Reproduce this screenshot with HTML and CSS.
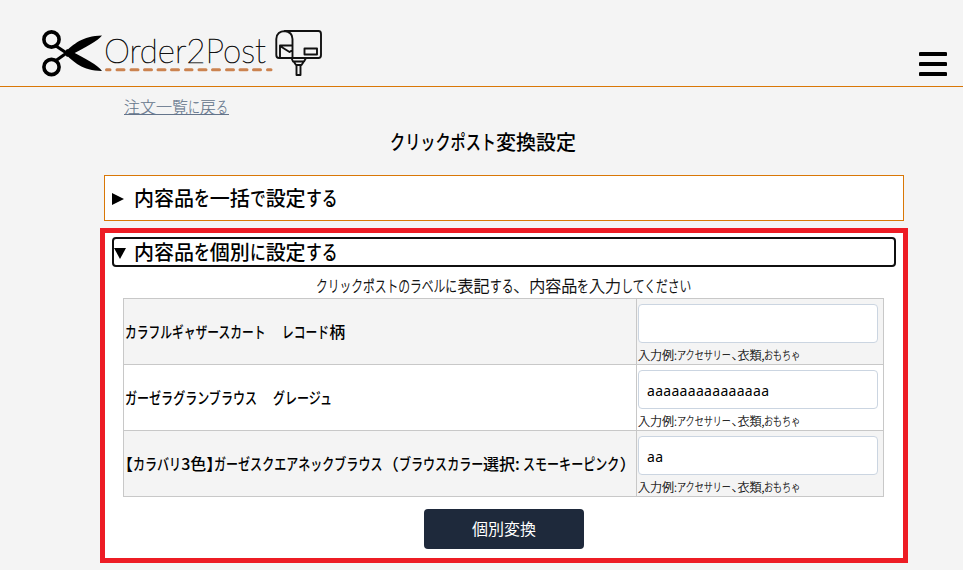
FILE: index.html
```html
<!DOCTYPE html>
<html lang="ja">
<head>
<meta charset="utf-8">
<title>Order2Post</title>
<link rel="stylesheet" href="styles.css">
</head>
<body>
<header class="header">
  <svg class="logo" viewBox="40 26 286 54" width="286" height="54">
    <g fill="none" stroke="#000" stroke-width="3.6">
      <circle cx="51.5" cy="39.5" r="7.6"/>
      <circle cx="51.5" cy="67" r="7.6"/>
      <path d="M56 46L68 54M56 60.500L68 52" stroke-width="3.200"/>
    </g>
    <path d="M64 53C74 44 82 36 102 35.500C98 41 86 47 67 57Z"/>
    <path d="M64 53C74 62 82 70.500 102 71C98 65 86 59 67 49Z"/>
    <text class="logo-text" x="104" y="63" textLength="162" lengthAdjust="spacingAndGlyphs">Order2Post</text>
    <path d="M106.500 69.700H110M117 69.700H124M131 69.700H138M144.500 69.700H151.500M158 69.700H165M171.500 69.700H178.500M185.500 69.700H192M199 69.700H206M212.500 69.700H219.500M226.500 69.700H233.500M240 69.700H247M253.500 69.700H260.500M267.500 69.700H271" stroke="#cb8350" stroke-width="3" stroke-linecap="round"/>
    <g fill="none" stroke="#111" stroke-width="1.9" stroke-linejoin="round">
      <path d="M284.500 31H318.500Q321 31 321 34V55Q321 58 318.500 58H279Q276.300 58 276.300 55V39C276.300 28.500 292.500 28.500 292.500 39V58M284.500 31Q292.500 32 292.500 39M280 57V45.500H292.500M280 46L289.500 52L292.500 50M304.500 48.500H317V54.500H304.500ZM291.500 58L293 61.500H304L306 58M294 62L296 65H301.500L303.500 62M296.500 65V75H300.500V65"/>
    </g>
  </svg>
  <svg class="menu" viewBox="0 0 28 24" width="28" height="24">
    <path d="M1.500 2H26.500M1.500 12H26.500M1.500 22H26.500" stroke="#000" stroke-width="4" stroke-linecap="round"/>
  </svg>
</header>
<main class="main">
  <a class="back" href="#">注文一覧に戻る</a>
  <h1 class="title">クリックポスト変換設定</h1>
  <section class="panel">
    <div class="summary"><i class="tri tri-right"></i><span>内容品を一括で設定する</span></div>
  </section>
  <section class="panel panel-active">
    <div class="summary summary-focus"><i class="tri tri-down"></i><span>内容品を個別に設定する</span></div>
    <p class="lead">クリックポストのラベルに表記する、内容品を入力してください</p>
    <div class="table">
      <div class="row">
        <div class="name">カラフルギャザースカート　レコード柄</div>
        <div class="cell"><input class="field" type="text"><span class="hint">入力例:アクセサリー、衣類,おもちゃ</span></div>
      </div>
      <div class="row">
        <div class="name name-wide">ガーゼラグランブラウス　グレージュ</div>
        <div class="cell"><input class="field" type="text" value="aaaaaaaaaaaaaaa"><span class="hint">入力例:アクセサリー、衣類,おもちゃ</span></div>
      </div>
      <div class="row">
        <div class="name name-wide">【カラバリ3色】ガーゼスクエアネックブラウス（ブラウスカラー選択: スモーキーピンク）</div>
        <div class="cell"><input class="field" type="text" value="aa"><span class="hint">入力例:アクセサリー、衣類,おもちゃ</span></div>
      </div>
    </div>
    <button class="submit" type="button">個別変換</button>
  </section>
</main>
<script src="kana.js"></script>
</body>
</html>
```
FILE: kana.js
```js
// Wraps each run of kana so that it can be set narrower than the kanji around it,
// and each lenticular bracket so that it takes half a character.
document.querySelectorAll('.back, .title, .summary span, .lead, .name, .hint').forEach(function (el) {
  el.innerHTML = el.textContent
    .replace(/[ぁ-ヺー]+/g, function (run) {
      return '<span class="kana" style="--n:' + run.length + '">' + run + '</span>';
    })
    .replace(/[【】]/g, '<span class="half">$&</span>');
});
```
FILE: styles.css
```css
* { box-sizing: border-box; }
body {
  margin: 0;
  height: 570px;
  overflow: hidden;
  background: #f4f4f4;
  color: #000;
  font: 16px/24px "Noto Sans CJK JP", sans-serif;
}
.header {
  height: 87px;
  padding: 26px 16px 0 40px;
  display: flex;
  justify-content: space-between;
  align-items: flex-start;
  border-bottom: 1px solid #d97706;
}
.logo { display: block; }
.logo-text { font: 100 33px Lato, sans-serif; fill: #111; stroke: #111; stroke-width: .6px; }
.menu { display: block; margin-top: 26px; }
.kana {
  --pitch: .755;
  display: inline-block;
  width: calc(var(--n) * 1em);
  margin-right: calc(var(--n) * (var(--pitch) - 1) * 1em);
  transform: scaleX(var(--pitch));
  transform-origin: left;
  white-space: nowrap;
}
.half { font-feature-settings: "halt"; }
.main { width: 809px; margin-left: 100px; }
.back {
  display: block;
  width: 105px;
  height: 24px;
  margin: 7px 0 0 24px;
  white-space: nowrap;
  color: #64748b;
  font-weight: 300;
  -webkit-text-stroke: .15px;
  text-decoration: none;
  background: linear-gradient(#64748b, #64748b) 0 20px / 100% 1px no-repeat;
}
.title {
  margin: 9px 0 0;
  padding-right: 43px;
  text-align: center;
  white-space: nowrap;
  font-size: 20px;
  line-height: 30px;
  font-weight: 500;
}
.title .kana { --pitch: .757; }
.panel {
  width: 800px;
  height: 46px;
  margin: 18px 0 0 4px;
  padding: 7px;
  background: #fff;
  border: 1px solid #d97706;
}
.summary {
  height: 30px;
  display: flex;
  align-items: center;
  font-size: 20px;
  line-height: 30px;
  font-weight: 500;
  white-space: nowrap;
}
.summary span .kana { --pitch: .79; }
.tri { width: 22px; flex: none; padding-top: 2px; }
.tri::before { content: ""; display: block; width: 0; }
.tri-right::before { border-left: 12px solid #000; border-top: 6.5px solid transparent; border-bottom: 6.5px solid transparent; }
.tri-down::before { border-top: 11px solid #000; border-left: 6px solid transparent; border-right: 6px solid transparent; }
.panel-active {
  width: 808px;
  height: 335px;
  margin: 7px 0 0;
  padding: 4px 7px;
  border: 5px solid #ed1c24;
}
.summary-focus { width: 784px; border: 2px solid #101010; border-radius: 4px; }
.summary-focus .tri { width: 20px; }
.lead { margin: 6px 0 1px; width: 784px; text-align: center; font-weight: 300; -webkit-text-stroke: .3px; white-space: nowrap; }
.lead .kana { --pitch: .735; }
.table { width: 761px; margin-left: 11px; border: 1px solid #c8c8c8; border-bottom: 0; }
.row { height: 66px; display: grid; grid-template-columns: 512px 1fr; border-bottom: 1px solid #c8c8c8; background: #fff; }
.row:nth-child(odd) { background: #f4f4f4; }
.name { display: flex; align-items: center; padding: 0 0 2px 1px; font-weight: 500; white-space: pre; }
.name .kana { --pitch: .735; }
.name-wide .kana { --pitch: .752; }
.cell { padding: 5px 0 0 1px; border-left: 1px solid #c8c8c8; }
.field {
  display: block;
  width: 240px;
  height: 39px;
  padding: 2px 8px 0;
  border: 1px solid #cbd5e1;
  border-radius: 4px;
  background: #fff;
  color: #000;
  font: 14px "Noto Sans", sans-serif;
  letter-spacing: .3px;
}
.hint { display: block; font-size: 12px; line-height: 20px; margin-top: 2px; font-weight: 300; -webkit-text-stroke: .2px; white-space: nowrap; font-feature-settings: "halt"; }
.submit {
  display: block;
  width: 160px;
  height: 40px;
  margin: 12px 0 0 312px;
  padding: 0 0 2px;
  border: 0;
  border-radius: 4px;
  background: #1e293b;
  color: #fff;
  font: 16px/38px "Noto Sans CJK JP", sans-serif;
}
```
